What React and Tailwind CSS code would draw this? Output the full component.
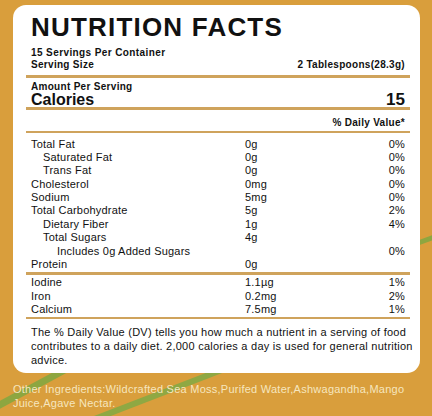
import React from "react";

const rows = [
  { name: "Total Fat", indent: 0, amt: "0g", pct: "0%" },
  { name: "Saturated Fat", indent: 1, amt: "0g", pct: "0%" },
  { name: "Trans Fat", indent: 1, amt: "0g", pct: "0%" },
  { name: "Cholesterol", indent: 0, amt: "0mg", pct: "0%" },
  { name: "Sodium", indent: 0, amt: "5mg", pct: "0%" },
  { name: "Total Carbohydrate", indent: 0, amt: "5g", pct: "2%" },
  { name: "Dietary Fiber", indent: 1, amt: "1g", pct: "4%" },
  { name: "Total Sugars", indent: 1, amt: "4g", pct: "" },
  { name: "Includes 0g Added Sugars", indent: 2, amt: "", pct: "0%" },
  { name: "Protein", indent: 0, amt: "0g", pct: "" },
];

const minerals = [
  { name: "Iodine", amt: "1.1µg", pct: "1%" },
  { name: "Iron", amt: "0.2mg", pct: "2%" },
  { name: "Calcium", amt: "7.5mg", pct: "1%" },
];

function Row({ r }) {
  const pad = r.indent === 2 ? "pl-[26px]" : r.indent === 1 ? "pl-[12px]" : "pl-0";
  return (
    <div className="grid grid-cols-[214px_1fr_auto] h-[13.4px] leading-[13.4px] text-[11px] tracking-[0.2px] text-[#111]">
      <div className={`${pad} whitespace-nowrap`}>{r.name}</div>
      <div>{r.amt}</div>
      <div className="text-right">{r.pct}</div>
    </div>
  );
}

export default function App() {
  return (
    <div
      className="relative w-[432px] h-[416px] overflow-hidden bg-[#d99e3c]"
      style={{ fontFamily: '"Liberation Sans", Arial, sans-serif' }}
    >
      <svg className="absolute inset-0" width="432" height="416" viewBox="0 0 432 416">
        <line x1="-6" y1="408" x2="72" y2="366" stroke="#8da640" strokeWidth="7" />
        <line x1="92" y1="420" x2="232" y2="366" stroke="#8fa843" strokeWidth="6" />
        <line x1="418" y1="243" x2="440" y2="235" stroke="#8da640" strokeWidth="5" />
      </svg>

      <div className="relative ml-[13px] mt-[5px] w-[407px] h-[368px] rounded-[13px] bg-white pl-[13px] pr-[10px] pt-[7px]">
        <div className="px-[5px]">
          <div className="h-[30px] leading-[30px] text-[26px] font-bold tracking-[1.2px] text-[#111] whitespace-nowrap">
            NUTRITION FACTS
          </div>
          <div className="mt-[5px] text-[10px] leading-[12px] font-bold tracking-[0.4px] text-[#111]">
            15 Servings Per Container
          </div>
          <div className="flex justify-between text-[10px] leading-[12px] font-bold tracking-[0.3px] text-[#111]">
            <span>Serving Size</span>
            <span>2 Tablespoons(28.3g)</span>
          </div>
        </div>
        <div className="mt-[4px] h-[3px] bg-[#cfa35c]" />
        <div className="px-[5px] pt-[3px]">
          <div className="text-[10px] leading-[12px] font-bold tracking-[0.3px] text-[#111]">
            Amount Per Serving
          </div>
          <div className="flex justify-between items-end h-[14px] leading-[14px] font-bold text-[#111]">
            <span className="text-[16px]">Calories</span>
            <span className="text-[17px]">15</span>
          </div>
        </div>
        <div className="h-[3px] bg-[#cfa35c]" />
        <div className="px-[5px] pt-[7px] pb-[1.5px]">
          <div className="text-right text-[10px] leading-[12px] font-bold tracking-[0.3px] text-[#111]">
            % Daily Value*
          </div>
        </div>
        <div className="h-[2.5px] bg-[#cfa35c]" />
        <div className="px-[5px] pt-[4.5px]">
          {rows.map((r) => (
            <Row key={r.name} r={r} />
          ))}
        </div>
        <div className="mt-[1px] h-[3px] bg-[#cfa35c]" />
        <div className="px-[5px] pt-[1px]">
          {minerals.map((r) => (
            <Row key={r.name} r={{ ...r, indent: 0 }} />
          ))}
        </div>
        <div className="h-[2.5px] bg-[#cfa35c]" />
        <div className="px-[5px] pt-[6px] text-[11px] leading-[14.2px] tracking-[0.25px] text-[#111]">
          <div className="whitespace-nowrap">The % Daily Value (DV) tells you how much a nutrient in a serving of food</div>
          <div className="whitespace-nowrap">contributes to a daily diet. 2,000 calories a day is used for general nutrition</div>
          <div className="whitespace-nowrap">advice.</div>
        </div>
      </div>

      <div className="relative ml-[13px] mt-[10px] text-[11px] leading-[13.5px] tracking-[0.25px] text-[#f6e6bf]">
        <div className="whitespace-nowrap">Other Ingredients:Wildcrafted Sea Moss,Purifed Water,Ashwagandha,Mango</div>
        <div className="whitespace-nowrap">Juice,Agave Nectar.</div>
      </div>
    </div>
  );
}
